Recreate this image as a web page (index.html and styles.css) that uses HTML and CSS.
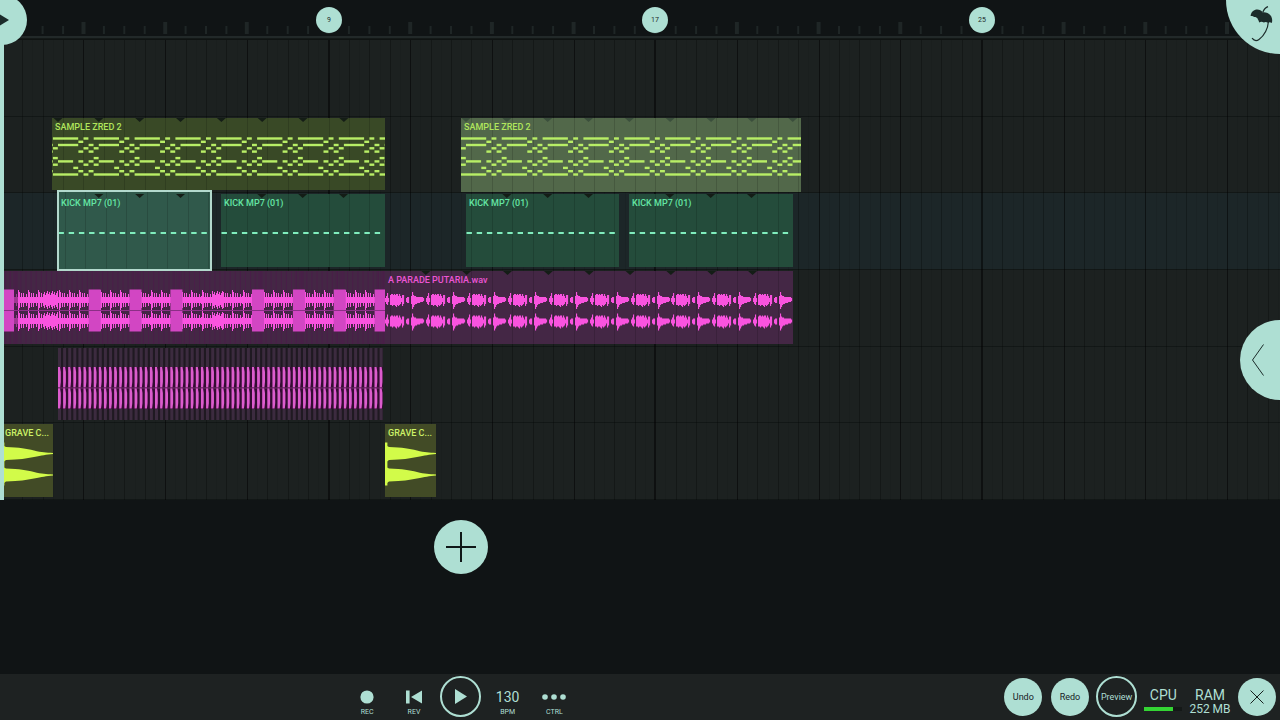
FILE: index.html
```html
<!DOCTYPE html>
<html lang="en">
<head>
    <meta charset="utf-8">
    <meta name="viewport" content="width=device-width, initial-scale=1">
    <title>Playlist</title>
    <link rel="stylesheet" href="styles.css">
</head>
<body>
    <div class="ruler">
        <svg class="ticks" id="ticks" aria-hidden="true"></svg>
        <button class="playhead-knob" aria-label="Playhead">
            <svg viewBox="0 0 10 12" width="10" height="12"><path d="M0 0 L10 6 L0 12 Z"/></svg>
        </button>
        <div id="markers"></div>
    </div>

    <main class="playlist">
        <div class="track"></div>
        <div class="track"></div>
        <div class="track active"></div>
        <div class="track"></div>
        <div class="track"></div>
        <div class="track"></div>
        <svg class="grid" id="grid" aria-hidden="true"></svg>
        <div class="playhead"></div>
    </main>

    <section class="workspace">
        <div class="lane">
            <button class="add-btn" aria-label="Add track">
                <svg viewBox="0 0 30 30" width="30" height="30"><path d="M15 0 V30 M0 15 H30"/></svg>
            </button>
        </div>
    </section>

    <footer class="toolbar">
        <div class="lane">
            <div class="transport">
                <button class="tool">
                    <span class="tool-icon"><svg viewBox="0 0 14 14" width="14" height="14"><circle cx="7" cy="7" r="6.6"/></svg></span>
                    <span class="tool-label">REC</span>
                </button>
                <button class="tool">
                    <span class="tool-icon"><svg viewBox="0 0 16 14" width="16" height="14"><path d="M0 0.5 H3.6 V13.5 H0 Z M16 0.5 V13.5 L5 7 Z"/></svg></span>
                    <span class="tool-label">REV</span>
                </button>
                <button class="play-btn" aria-label="Play">
                    <svg viewBox="0 0 12 15" width="12" height="15"><path d="M0 0 L12 7.5 L0 15 Z"/></svg>
                </button>
                <button class="tool">
                    <span class="tool-icon">130</span>
                    <span class="tool-label">BPM</span>
                </button>
                <button class="tool">
                    <span class="tool-icon"><svg viewBox="0 0 24 6" width="24" height="6"><circle cx="3" cy="3" r="2.8"/><circle cx="12" cy="3" r="2.8"/><circle cx="21" cy="3" r="2.8"/></svg></span>
                    <span class="tool-label">CTRL</span>
                </button>
            </div>
        </div>

        <div class="actions">
            <button class="round-btn">Undo</button>
            <button class="round-btn">Redo</button>
            <button class="round-btn outline">Preview</button>
            <div class="stat">
                <span class="stat-name">CPU</span>
                <div class="meter"><div class="meter-fill"></div></div>
            </div>
            <div class="stat">
                <span class="stat-name">RAM</span>
                <span class="stat-value">252 MB</span>
            </div>
            <button class="round-btn" aria-label="Close">
                <svg viewBox="0 0 14 14" width="14" height="14"><path d="M0.5 0.5 L13.5 13.5 M13.5 0.5 L0.5 13.5"/></svg>
            </button>
        </div>
    </footer>

    <button class="menu-btn" aria-label="Main menu">
        <svg viewBox="0 0 24 36" width="24" height="36">
            <path class="leaf" d="M0.6 10 C1 6 4 3.6 7.2 3.6 C9.6 3.6 11.4 4.4 12.6 6.4 C15.4 6 18.6 7 20.4 9.2 C22.2 11.2 22.6 14.6 21.8 17 C20.4 16 19.2 15.8 18 16.8 C16.4 15.8 15.2 15.6 13.8 16.6 C12.4 15.6 10.8 15.6 9.2 16.4 C8.8 14.6 7.8 13.4 7.4 12.2 C6.2 11 5 10.8 4 11 C3 9.8 1.6 9.8 0.6 10 Z"/>
            <path class="stem" d="M12.6 6.4 C14.2 3 15.6 1.4 18 0.6 M18.4 15.8 C18 22 14.6 29.6 9 33.4 C6.8 35 4 34.6 2 32.2"/>
        </svg>
    </button>
    <button class="drawer-btn" aria-label="Open panel">
        <svg viewBox="0 0 12 32" width="12" height="32"><path d="M11.5 0.5 L0.5 16 L11.5 31.5"/></svg>
    </button>

    <script src="playlist.js"></script>
</body>
</html>
```
FILE: styles.css
```css
* {
    margin: 0;
    padding: 0;
    box-sizing: border-box;
}

:root {
    --mint: #aedfd3;
    --dark: #101415;
    --panel: #1e2222;
    --bar-bg: #1c2120;
}

body {
    position: relative;
    display: flex;
    flex-direction: column;
    min-height: 100vh;
    overflow: hidden;
    font-family: Roboto, 'Liberation Sans', sans-serif;
    background: var(--dark);
    color: var(--mint);
}

button {
    border: none;
    background: none;
    color: inherit;
    font-family: inherit;
    cursor: pointer;
}

svg {
    display: block;
}

/* Ruler */
.ruler {
    position: relative;
    height: 40px;
}

.ticks {
    width: 100%;
    height: 40px;
}

.marker {
    position: absolute;
    top: 7px;
    width: 26px;
    height: 26px;
    margin-left: -13px;
    border-radius: 50%;
    background: var(--mint);
    color: #1c2b2a;
    font-size: 7px;
    line-height: 26px;
    text-align: center;
}

.playhead-knob {
    position: absolute;
    z-index: 6;
    top: -5px;
    left: -23px;
    width: 50px;
    height: 50px;
    padding-left: 22px;
    border-radius: 50%;
    background: var(--mint);
    fill: #1c2b2a;
}

/* Playlist */
.playlist {
    position: relative;
    display: grid;
    grid-template-rows: repeat(6, 1fr);
    height: 460px;
    overflow: hidden;
}

.track {
    position: relative;
    border-bottom: 1px solid #121716;
    background: var(--bar-bg);
}

.track.active {
    background: #1c2628;
}

.grid {
    position: absolute;
    inset: 0;
    width: 100%;
    height: 100%;
    pointer-events: none;
}

.playhead {
    position: absolute;
    z-index: 5;
    inset: 0 auto 0 0;
    width: 4px;
    background: var(--mint);
}

.clip {
    position: absolute;
    z-index: 1;
    top: 1px;
    bottom: 2px;
    overflow: hidden;
}

.clip svg {
    position: absolute;
    inset: 0;
    width: 100%;
    height: 100%;
}

.clip-name {
    position: relative;
    z-index: 1;
    display: block;
    padding: 3px 0 0 3px;
    font-size: 9px;
    line-height: 12px;
    font-weight: 500;
    white-space: nowrap;
}

.clip .flag {
    fill: #141d16;
}

.sample {
    background: #394926;
    color: #b0e65c;
}

.sample.selected {
    bottom: 0;
    background: #52684a;
}

.sample.selected .flag {
    fill: #3b4f3c;
}

.kick {
    background: #244c3b;
    color: #64e6a5;
}

.kick.selected {
    z-index: 3;
    top: -3px;
    bottom: -2px;
    border: 2px solid #b3d9cd;
    background: #30594b;
}

.kick.selected .clip-name {
    padding: 5px 0 0 2px;
}

.vocal {
    background: #442745;
    color: #ec55d5;
}

.vocal .wave {
    fill: #f953df;
}

.vocal .block {
    fill: #d246c3;
}

.vocal .stripe {
    fill: #4a1f49;
}

.vocal .axis {
    fill: #8b2f86;
}

.hats {
    background: #1f1921;
}

.hats .slice {
    fill: #3c2b3f;
}

.hats .gap {
    fill: #330c31;
}

.hats .wave {
    fill: #dc5ccd;
}

.hats .axis {
    fill: #7a2c72;
}

.bass {
    background: #424b26;
    color: #cdf268;
}

.bass .wave {
    fill: #d2fb49;
}

/* Area under the tracks */
.workspace {
    flex: 1;
    padding-top: 20px;
}

.lane {
    display: flex;
    justify-content: center;
    width: 72%;
}

.add-btn {
    display: grid;
    place-items: center;
    width: 54px;
    height: 54px;
    border-radius: 50%;
    background: var(--mint);
    stroke: #101818;
    stroke-width: 2;
}

/* Bottom toolbar */
.toolbar {
    display: flex;
    justify-content: space-between;
    height: 46px;
    padding-bottom: 1px;
    background: var(--panel);
}

.transport {
    display: grid;
    grid-template-columns: repeat(5, 1fr);
    width: 234px;
    place-items: center;
    fill: var(--mint);
}

.tool {
    display: flex;
    flex-direction: column;
    align-items: center;
    padding-top: 12px;
}

.tool-icon {
    display: flex;
    align-items: center;
    height: 18px;
    font-size: 14px;
}

.tool-label {
    font-size: 7px;
    line-height: 12px;
}

.play-btn {
    display: grid;
    place-items: center;
    width: 41px;
    height: 41px;
    padding-left: 1px;
    border: 2px solid var(--mint);
    border-radius: 50%;
    fill: var(--mint);
}

.actions {
    display: grid;
    flex: none;
    grid-template-columns: repeat(6, 1fr);
    width: 280px;
    place-items: center;
}

.round-btn {
    display: grid;
    place-items: center;
    width: 38px;
    height: 38px;
    border-radius: 50%;
    background: var(--mint);
    color: #17211f;
    font-size: 9px;
}

.round-btn svg {
    stroke: #17211f;
}

.round-btn.outline {
    width: 41px;
    height: 41px;
    border: 2px solid var(--mint);
    background: none;
    color: var(--mint);
}

.stat {
    display: flex;
    flex-direction: column;
    align-items: center;
    align-self: start;
    padding-top: 14px;
}

.stat-name {
    font-size: 14px;
    line-height: 15px;
}

.stat-value {
    font-size: 12px;
    line-height: 12px;
    white-space: nowrap;
}

.meter {
    width: 38px;
    height: 4px;
    margin-top: 4px;
    background: #141817;
}

.meter-fill {
    width: 76%;
    height: 100%;
    background: #34d534;
}

/* Edge buttons */
.menu-btn {
    position: absolute;
    z-index: 6;
    top: 0;
    right: 0;
    width: 54px;
    height: 54px;
    padding: 6px 0 0 24px;
    border-radius: 0 0 0 54px;
    background: var(--mint);
    display: flex;
}

.leaf {
    fill: #1c2b2a;
}

.stem {
    fill: none;
    stroke: #1c2b2a;
    stroke-width: 1.2;
}

.drawer-btn {
    position: absolute;
    z-index: 6;
    top: calc(50% - 40px);
    right: 0;
    display: flex;
    align-items: center;
    width: 40px;
    height: 80px;
    padding-left: 12px;
    border-radius: 40px 0 0 40px;
    background: var(--mint);
    fill: none;
    stroke: #1c2b2a;
}
```
FILE: playlist.js
```javascript
// timeline scale
const BAR = 40.84;
const ORIGIN = 1.8;
const STEP = BAR / 8;

const clips = [
    { track: 1, type: 'sample', name: 'SAMPLE ZRED 2', x: 52, w: 333, offset: 6, flags: 0 },
    { track: 1, type: 'sample selected', name: 'SAMPLE ZRED 2', x: 461, w: 340, offset: 5, flags: 0 },
    { track: 2, type: 'kick selected', name: 'KICK MP7 (01)', x: 57, w: 155, offset: -1, flags: 1 },
    { track: 2, type: 'kick', name: 'KICK MP7 (01)', x: 221, w: 164, offset: 0, flags: 1 },
    { track: 2, type: 'kick', name: 'KICK MP7 (01)', x: 466, w: 153, offset: 0, flags: 1 },
    { track: 2, type: 'kick', name: 'KICK MP7 (01)', x: 629, w: 164, offset: 0, flags: 1 },
    { track: 3, type: 'vocal chopped', name: '', x: 0, w: 385 },
    { track: 3, type: 'vocal', name: 'A PARADE PUTARIA.wav', x: 385, w: 408, offset: 0, flags: 1 },
    { track: 4, type: 'hats', name: '', x: 58, w: 325 },
    { track: 5, type: 'bass', name: 'GRAVE C...', x: 2, w: 51 },
    { track: 5, type: 'bass', name: 'GRAVE C...', x: 385, w: 51 }
];

// [row, step, length] inside one bar
const notes = [
    [0, -1, 5], [0, 5, 1],
    [1, 4, 1],
    [2, 0, 4], [2, 6, 1],
    [3, 5, 1], [3, 7, 1],
    [4, 4, 1], [4, 6, 1],
    [6, 7, 1],
    [7, 0, 3], [7, 4, 1], [7, 6, 1],
    [8, 5, 1], [8, 7, 1],
    [9, 3, 1],
    [10, 4, 1], [10, 6, 1],
    [11, -1, 5], [11, 5, 1]
];

// peaks of one bar of the vocal, one value per pixel
const up = [2, 4, 7, 2, 0, 5, 6, 6, 5, 6, 5, 6, 6, 4, 6, 4, 2, 5, 5, 0, 0, 2, 3, 3, 0, 0, 4, 8, 5, 4, 4, 3, 3, 3, 3, 3, 3, 3, 2, 0, 0];
const down = [2, 4, 5, 2, 0, 5, 5, 6, 5, 5, 6, 7, 5, 6, 5, 4, 2, 6, 4, 0, 0, 2, 3, 3, 0, 0, 4, 9, 7, 5, 4, 4, 3, 3, 3, 2, 2, 2, 1, 0, 0];

function rect(x, y, w, h, cls) {
    return `<rect x="${x.toFixed(1)}" y="${y}" width="${w.toFixed(1)}" height="${h}"${cls ? ` class="${cls}"` : ''}/>`;
}

function drawFlags(clip) {
    let out = '';
    for (let i = clip.flags; i * BAR + clip.offset < clip.w - 3; i++) {
        const x = i * BAR + clip.offset;
        out += `<path class="flag" d="M${x - 4.5} 0 H${x + 4.5} L${x} 4 Z"/>`;
    }
    return out;
}

// half bar lines that show through a clip
function drawClipGrid(clip) {
    let out = '';
    for (let x = ORIGIN; x < clip.x + clip.w; x += BAR / 2) {
        if (x > clip.x) {
            out += `<rect x="${Math.round(x - clip.x)}" width="1" height="100%" opacity="0.14"/>`;
        }
    }
    return out;
}

function drawNotes(clip) {
    let out = '';
    for (let bar = -1; bar * BAR < clip.w; bar++) {
        for (const [row, step, len] of notes) {
            const x = clip.offset + bar * BAR + step * STEP;
            out += rect(x, (19.3 + row * 3.27).toFixed(1), len * STEP - 0.2, 2.4);
        }
    }
    return `<g fill="#b8ee66">${out}</g>`;
}

function drawKicks(clip) {
    const y = clip.type.includes('selected') ? 40 : 38;
    let out = '';
    for (let x = clip.offset + 0.5; x < clip.w - 6; x += STEP * 2) {
        out += rect(x, y, 5.4, 2);
    }
    return `<g fill="#80edbd">${out}</g>`;
}

function drawVocal(clip) {
    let out = '';
    for (const y of [29, 50.5]) {
        for (let x = 0; x < clip.w; x++) {
            const i = Math.floor(x % BAR);
            out += rect(x, y - up[i], 1.1, up[i] + down[i], 'wave');
        }
    }
    return out;
}

function drawChopped(clip) {
    const peaks = [10, 8, 3, 7, 3, 7, 3, 3, 6, 3, 4];
    let out = '';
    for (let x = 0; x < clip.w; x += STEP) {
        out += rect(x, 0, 1, 80, 'stripe');
    }
    for (let x = 4; x < clip.w; x++) {
        const busy = (x > 42 && x < 58) || (x > 211 && x < 223);
        const h = busy ? 5 + (x * 7) % 5 : peaks[Math.floor((x + 3) % (STEP * 2))];
        for (const y of [29, 50]) {
            out += rect(x, y - h, 1, h * 2, 'wave');
        }
    }
    for (let i = 0; i < 10; i++) {
        if (i === 1 || i === 5) continue;
        const x = 7 + i * BAR;
        out += `<g opacity="0.5">${rect(x + 2, 0, 2, 80, 'stripe')}${rect(x + 6, 0, 5, 80, 'stripe')}</g>`;
        if (i > 0) out += rect(x, 18.5, 12, 42, 'block');
    }
    out += rect(4, 18.5, 10, 42, 'block');
    return out + rect(0, 39, clip.w, 1, 'axis');
}

function drawHats(clip) {
    let out = '';
    for (let x = 0; x < clip.w; x += STEP) {
        out += rect(x, 0, 3, 74, 'slice');
        out += rect(x, 19, STEP, 42, 'gap');
        for (const y of [19, 40]) {
            out += `<path class="wave" d="M${x} ${y} H${x + 2} L${x + 2.8} ${y + 5} V${y + 15} L${x + 2.2} ${y + 20.5} H${x} Z"/>`;
        }
    }
    return out + rect(0, 39.5, clip.w, 1, 'axis');
}

function drawBass() {
    let out = rect(0, 18.5, 2.4, 43);
    for (const y of [29.5, 51]) {
        out += `<path d="M2 ${y - 7.5} L4 ${y - 6.5} C18 ${y - 6} 24 ${y - 5} 32 ${y - 3} S44 ${y - 1} 51 ${y - 0.5} V${y + 0.5} C44 ${y + 1} 40 ${y + 2} 32 ${y + 3.5} S18 ${y + 6} 4 ${y + 6.5} L2 ${y + 8} Z"/>`;
    }
    return `<g class="wave">${out}</g>`;
}

function drawClip(clip) {
    if (clip.type.includes('chopped')) return drawChopped(clip);
    if (clip.type === 'hats') return drawHats(clip);
    if (clip.type === 'bass') return drawBass();
    const body = clip.type.includes('sample') ? drawNotes(clip)
        : clip.type.includes('kick') ? drawKicks(clip)
        : drawVocal(clip);
    const flags = drawFlags(clip);
    return drawClipGrid(clip) + body
        + (clip.type === 'kick selected' ? `<g transform="translate(0 2)">${flags}</g>` : flags);
}

const tracks = document.querySelectorAll('.track');
for (const clip of clips) {
    const el = document.createElement('div');
    el.className = 'clip ' + clip.type;
    el.style.left = clip.x + 'px';
    el.style.width = clip.w + 'px';
    el.innerHTML = `<svg aria-hidden="true">${drawClip(clip)}</svg>`
        + (clip.name ? `<span class="clip-name">${clip.name}</span>` : '');
    tracks[clip.track].appendChild(el);
}

// ruler and grid lines, one every half bar
let ticks = '<rect y="36" width="100%" height="2" fill="#222929"/><rect y="38" width="100%" height="1" fill="#141918"/><rect y="39" width="100%" height="1" fill="#0f1312"/>';
let lines = '';
for (let i = 1; i < 200; i++) {
    const x = ORIGIN + i * BAR / 2;
    const major = i % 4 === 0;
    if (i > 1) {
        ticks += major ? rect(x - 2, 22, 4, 12) : rect(x - 1, 26, 2, 8);
    }
    lines += i % 16 === 0
        ? `<rect x="${Math.round(x) - 1}" width="2" height="100%" opacity="0.5"/>`
        : `<rect x="${Math.round(x)}" width="1" height="100%" opacity="${major ? 0.5 : 0.26}"/>`;
    lines += `<rect x="${Math.round(x + STEP * 2)}" width="1" height="100%" opacity="0.06"/>`;
}
document.getElementById('ticks').innerHTML = `<g fill="#1f2626">${ticks}</g>`;
document.getElementById('grid').innerHTML = lines;

const markers = document.getElementById('markers');
for (const bar of [9, 17, 25]) {
    const el = document.createElement('div');
    el.className = 'marker';
    el.style.left = Math.round(ORIGIN + (bar - 1) * BAR) + 'px';
    el.textContent = bar;
    markers.appendChild(el);
}
```
